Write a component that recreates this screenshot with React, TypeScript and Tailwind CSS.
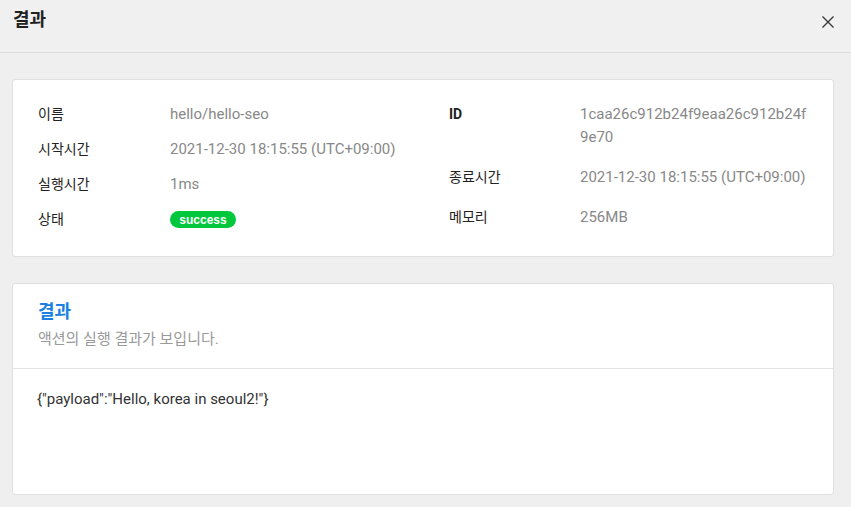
import React from 'react';

interface InfoRow {
    label: string;
    value: React.ReactNode;
    bold?: boolean;
}

const leftRows: InfoRow[] = [
    { label: '이름', value: 'hello/hello-seo' },
    { label: '시작시간', value: '2021-12-30 18:15:55 (UTC+09:00)' },
    { label: '실행시간', value: '1ms' },
    {
        label: '상태',
        value: (
            <span className="inline-flex h-[17px] w-[66px] items-center justify-center rounded-full bg-[#00c73c] font-['Liberation_Sans',sans-serif] text-[12px] leading-none font-bold text-white">
                success
            </span>
        ),
    },
];

const rightRows: InfoRow[] = [
    { label: 'ID', value: '1caa26c912b24f9eaa26c912b24f9e70', bold: true },
    { label: '종료시간', value: '2021-12-30 18:15:55 (UTC+09:00)' },
    { label: '메모리', value: '256MB' },
];

const App: React.FC = () => {
    return (
        <div className="min-h-[507px] w-[851px] bg-[#efefef] font-['Roboto','Noto_Sans_CJK_KR',sans-serif] text-[14px]">
            {/* Header */}
            <div className="flex h-[53px] items-start justify-between border-b border-[#dcdcdc] bg-[#f0f0f0] pt-[8px] pl-[13px] pr-[17px]">
                <h1 className="text-[18px] leading-[23px] font-bold text-[#222]">결과</h1>
                <button className="mt-[8px] text-[#333]" aria-label="close">
                    <svg width="12" height="12" viewBox="0 0 12 12" fill="none" stroke="currentColor" strokeWidth="1.3">
                        <path d="M0.5 0.5L11.5 11.5M11.5 0.5L0.5 11.5" />
                    </svg>
                </button>
            </div>

            <div className="flex flex-col gap-[26px] pt-[26px] pl-[12px] pr-[17px]">
                {/* Info card */}
                <div className="flex rounded-[3px] border border-[#e0e0e0] bg-white pt-[23px] pb-[25px] pl-[25px] pr-[24px]">
                    <div className="flex w-[411px] flex-col gap-[12px]">
                        {leftRows.map((row) => (
                            <div key={row.label} className="flex leading-[23px]">
                                <span className="w-[132px] shrink-0 text-[#222]">{row.label}</span>
                                <span className="flex items-center text-[15px] text-[#888]">{row.value}</span>
                            </div>
                        ))}
                    </div>
                    <div className="flex flex-1 flex-col gap-[17px]">
                        {rightRows.map((row) => (
                            <div key={row.label} className="flex leading-[23px]">
                                <span className={`w-[131px] shrink-0 text-[#222] ${row.bold ? 'font-bold' : ''}`}>{row.label}</span>
                                <span className="min-w-0 flex-1 break-all text-[15px] text-[#888]">{row.value}</span>
                            </div>
                        ))}
                    </div>
                </div>

                {/* Result card */}
                <div className="rounded-[3px] border border-[#e0e0e0] bg-white">
                    <div className="border-b border-[#e3e3e3] pt-[16px] pb-[18px] pl-[25px]">
                        <h2 className="text-[18px] leading-[24px] font-bold text-[#1a7fe0]">결과</h2>
                        <p className="mt-[5px] text-[15px] leading-[21px] text-[#999]">액션의 실행 결과가 보입니다.</p>
                    </div>
                    <div className="h-[125px] pt-[20px] pl-[24px] text-[15px] leading-[21px] text-[#333]">
                        {'{"payload":"Hello, korea in seoul2!"}'}
                    </div>
                </div>
            </div>
        </div>
    );
};

export default App;
